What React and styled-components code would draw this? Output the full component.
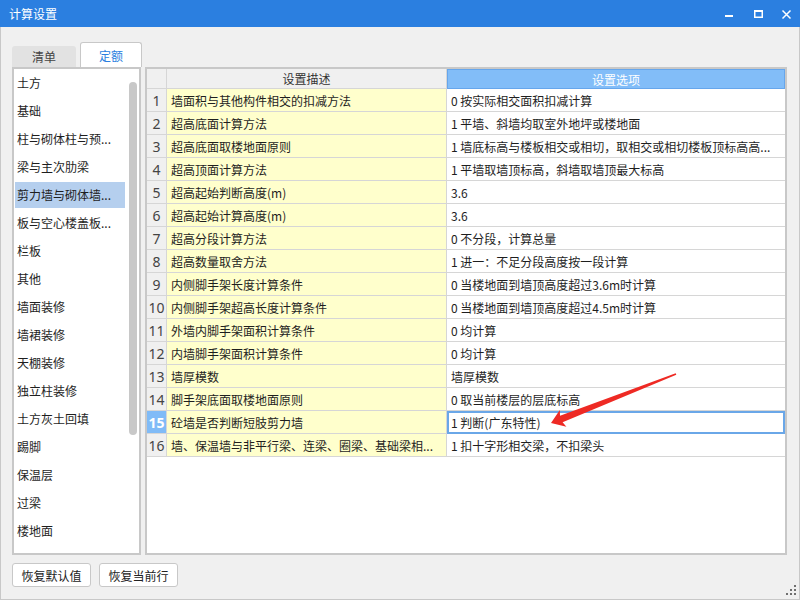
import React from 'react';
import styled, { createGlobalStyle } from 'styled-components';

//----Styled Components----//
const GlobalStyle = createGlobalStyle`
  *, *::before, *::after { box-sizing: border-box; }
  html, body { margin: 0; padding: 0; }
  body {
    width: 800px;
    height: 600px;
    overflow: hidden;
    background: #f0f0f0;
    font-family: "Noto Sans CJK SC", "Noto Sans", sans-serif;
  }
`;

const Window = styled.div`
  position: relative;
  width: 800px;
  height: 600px;
  display: flex;
  flex-direction: column;
  background: #f0f0f0;
`;

const TitleBar = styled.div`
  height: 27px;
  flex-shrink: 0;
  display: flex;
  align-items: center;
  background: #2b7fe0;
  color: #fff;
  font-size: 12px;
  padding-left: 9px;
`;

const Title = styled.span`
  flex: 1;
`;

const WinControls = styled.div`
  display: flex;
  height: 100%;
`;

const WinButton = styled.div`
  width: 29px;
  height: 27px;
  display: flex;
`;

const Body = styled.div`
  position: relative;
  flex: 1;
  min-height: 0;
  display: flex;
  flex-direction: column;
  padding: 15px 12px 12px 11px;
  border: 1px solid #c8c8c8;
  border-top: none;
`;

const TabBar = styled.div`
  display: flex;
  align-items: flex-end;
  gap: 4px;
  height: 25px;
  flex-shrink: 0;
`;

const Tab = styled.div`
  width: ${(p) => (p.$active ? 62 : 64)}px;
  height: ${(p) => (p.$active ? 25 : 21)}px;
  display: flex;
  align-items: center;
  justify-content: center;
  font-size: 12px;
  border-radius: 3px 3px 0 0;
  background: ${(p) => (p.$active ? '#fff' : '#e2e2e2')};
  color: ${(p) => (p.$active ? '#2b7fe0' : '#444')};
  border: ${(p) => (p.$active ? '1px solid #c8c8c8' : 'none')};
  border-bottom: none;
`;

const Panels = styled.div`
  flex: 1;
  min-height: 0;
  display: flex;
  gap: 4px;
`;

const NavList = styled.div`
  width: 129px;
  flex-shrink: 0;
  display: flex;
  background: #fff;
  border: 2px solid #c8c8c8;
  overflow: hidden;
`;

const NavItems = styled.div`
  flex: 1;
  padding: 1px 0 0 1px;
  overflow: hidden;
`;

const NavItem = styled.div`
  height: 26px;
  margin-bottom: 2px;
  padding-left: 2px;
  line-height: 26px;
  font-size: 12px;
  color: #1e1e1e;
  white-space: nowrap;
  overflow: hidden;
  background: ${(p) => (p.$selected ? '#b5cfee' : 'transparent')};
`;

const ScrollTrack = styled.div`
  width: 14px;
  flex-shrink: 0;
  padding: 13px 0 0 4px;
`;

const ScrollThumb = styled.div`
  width: 8px;
  height: 353px;
  border-radius: 4px;
  background: #c8c8c8;
`;

const TableFrame = styled.div`
  flex: 1;
  display: flex;
  flex-direction: column;
  background: #fff;
  border: 2px solid #c8c8c8;
`;

const Row = styled.div`
  display: grid;
  grid-template-columns: 20px 280px 1fr;
  height: ${(p) => (p.$header ? 20 : 23)}px;
`;

const HeadCell = styled.div`
  display: flex;
  align-items: center;
  justify-content: center;
  font-size: 12px;
  background: ${(p) => (p.$blue ? '#82bdf8' : '#f0f0f0')};
  color: ${(p) => (p.$blue ? '#fff' : '#333')};
  border: ${(p) => (p.$blue ? '1px solid #66a6ec' : 'none')};
  border-right: 1px solid ${(p) => (p.$blue ? '#66a6ec' : '#d6d6d6')};
  border-bottom: 1px solid ${(p) => (p.$blue ? '#66a6ec' : '#d6d6d6')};
`;

const NumCell = styled.div`
  display: flex;
  align-items: center;
  justify-content: center;
  font-family: "Noto Sans", sans-serif;
  font-size: 14px;
  font-weight: ${(p) => (p.$active ? 700 : 400)};
  color: ${(p) => (p.$active ? '#fff' : '#444')};
  background: ${(p) => (p.$active ? '#80bbf7' : '#f0f0f0')};
  border-right: 1px solid #d6d6d6;
  border-bottom: 1px solid #d6d6d6;
`;

const TextCell = styled.div`
  display: flex;
  align-items: center;
  padding-left: 4px;
  font-size: 12px;
  color: #1e1e1e;
  white-space: nowrap;
  overflow: hidden;
  background: ${(p) => (p.$desc ? '#ffffcc' : '#fff')};
  border-right: ${(p) => (p.$desc ? '1px solid #d6d6d6' : 'none')};
  border-bottom: 1px solid #d6d6d6;
  outline: ${(p) => (p.$focus ? '2px solid #6aa7e8' : 'none')};
  outline-offset: -2px;
`;

const Footer = styled.div`
  display: flex;
  gap: 8px;
  margin-top: 8px;
  flex-shrink: 0;
`;

const Button = styled.button`
  width: 79px;
  height: 24px;
  padding: 0;
  background: #fff;
  border: 1px solid #c8c8c8;
  border-radius: 3px;
  font-family: "Noto Sans CJK SC", sans-serif;
  font-size: 12px;
  color: #222;
`;

const Grip = styled.svg`
  position: absolute;
  right: 2px;
  bottom: 2px;
`;

const Overlay = styled.svg`
  position: absolute;
  left: 0;
  top: 0;
  pointer-events: none;
`;
//----End of Styled Components----//

const navItems = [
  '土方', '基础', '柱与砌体柱与预...', '梁与主次肋梁', '剪力墙与砌体墙...',
  '板与空心楼盖板...', '栏板', '其他', '墙面装修', '墙裙装修', '天棚装修',
  '独立柱装修', '土方灰土回填', '踢脚', '保温层', '过梁', '楼地面', '楼梯与室外附件',
];

const rows = [
  ['墙面积与其他构件相交的扣减方法', '0 按实际相交面积扣减计算'],
  ['超高底面计算方法', '1 平墙、斜墙均取室外地坪或楼地面'],
  ['超高底面取楼地面原则', '1 墙底标高与楼板相交或相切，取相交或相切楼板顶标高高...'],
  ['超高顶面计算方法', '1 平墙取墙顶标高，斜墙取墙顶最大标高'],
  ['超高起始判断高度(m)', '3.6'],
  ['超高起始计算高度(m)', '3.6'],
  ['超高分段计算方法', '0 不分段，计算总量'],
  ['超高数量取舍方法', '1 进一：不足分段高度按一段计算'],
  ['内侧脚手架长度计算条件', '0 当楼地面到墙顶高度超过3.6m时计算'],
  ['内侧脚手架超高长度计算条件', '0 当楼地面到墙顶高度超过4.5m时计算'],
  ['外墙内脚手架面积计算条件', '0 均计算'],
  ['内墙脚手架面积计算条件', '0 均计算'],
  ['墙厚模数', '墙厚模数'],
  ['脚手架底面取楼地面原则', '0 取当前楼层的层底标高'],
  ['砼墙是否判断短肢剪力墙', '1 判断(广东特性)'],
  ['墙、保温墙与非平行梁、连梁、圈梁、基础梁相...', '1 扣十字形相交梁，不扣梁头'],
];

export default function App() {
  const activeRow = 15;
  return (
    <Window>
      <GlobalStyle />
      <TitleBar>
        <Title>计算设置</Title>
        <WinControls>
          <WinButton>
            <svg width="29" height="27"><rect x="12" y="15" width="8" height="2" fill="#fff" /></svg>
          </WinButton>
          <WinButton>
            <svg width="29" height="27">
              <rect x="12.75" y="10.75" width="7.5" height="6.5" fill="none" stroke="#fff" strokeWidth="1.5" />
              <rect x="12" y="10" width="9" height="2" fill="#fff" />
            </svg>
          </WinButton>
          <WinButton>
            <svg width="29" height="27">
              <path d="M11.5 10.5 L19.5 18.5 M19.5 10.5 L11.5 18.5" stroke="#fff" strokeWidth="1.5" />
            </svg>
          </WinButton>
        </WinControls>
      </TitleBar>

      <Body>
        <TabBar>
          <Tab>清单</Tab>
          <Tab $active>定额</Tab>
        </TabBar>

        <Panels>
          <NavList>
            <NavItems>
              {navItems.map((name, i) => (
                <NavItem key={name} $selected={i === 4}>{name}</NavItem>
              ))}
            </NavItems>
            <ScrollTrack>
              <ScrollThumb />
            </ScrollTrack>
          </NavList>

          <TableFrame>
            <Row $header>
              <HeadCell />
              <HeadCell>设置描述</HeadCell>
              <HeadCell $blue>设置选项</HeadCell>
            </Row>
            {rows.map(([desc, option], i) => (
              <Row key={i}>
                <NumCell $active={i + 1 === activeRow}>{i + 1}</NumCell>
                <TextCell $desc>{desc}</TextCell>
                <TextCell $focus={i + 1 === activeRow}>{option}</TextCell>
              </Row>
            ))}
          </TableFrame>
        </Panels>

        <Footer>
          <Button>恢复默认值</Button>
          <Button>恢复当前行</Button>
        </Footer>

        <Grip width="12" height="12">
          {[[9, 0], [5, 4], [9, 4], [1, 8], [5, 8], [9, 8]].map(([x, y]) => (
            <rect key={`${x}-${y}`} x={x} y={y} width="2" height="2" fill="#6f6f6f" />
          ))}
        </Grip>
      </Body>

      <Overlay width="800" height="600">
        <polygon
          points="551,423 566.4,426.7 562.6,422.3 676.3,374.7 675.7,373.3 560,415.7 559.8,409.9"
          fill="#ee2a24"
        />
      </Overlay>
    </Window>
  );
}
